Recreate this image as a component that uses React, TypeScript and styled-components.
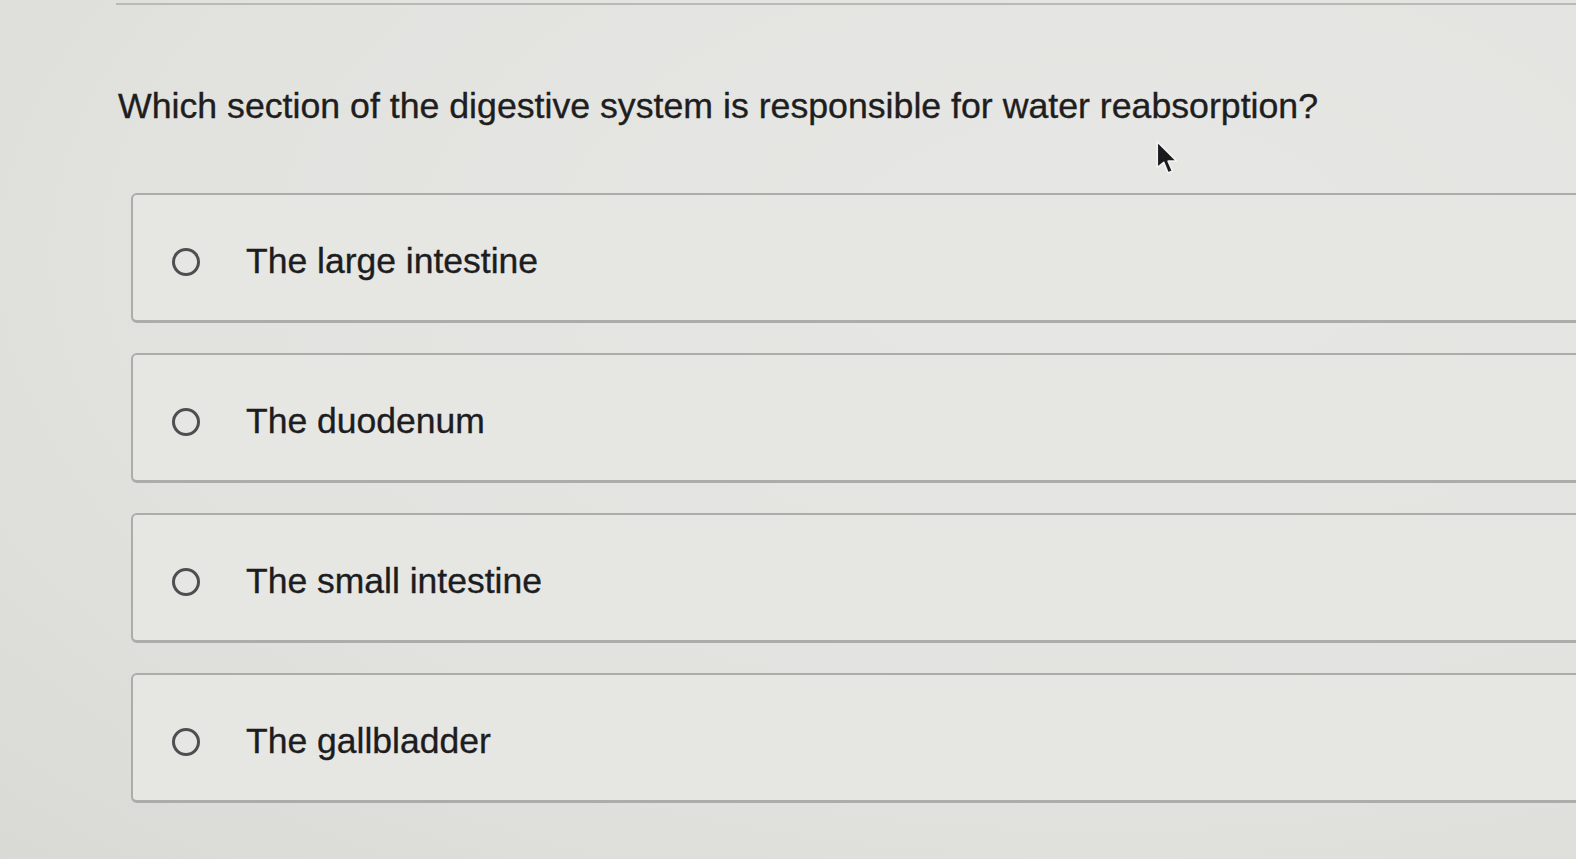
import React, { useState } from 'react';
import styled, { createGlobalStyle } from 'styled-components';

const GlobalStyle = createGlobalStyle`
  html, body {
    margin: 0;
    padding: 0;
    background: #e3e3e0;
  }
  body {
    font-family: 'Liberation Sans', Arial, sans-serif;
    color: #222;
  }
`;

const Page = styled.div`
  position: relative;
  width: 1576px;
  height: 859px;
  overflow: hidden;
  background: radial-gradient(ellipse at 70% 30%, #e7e7e5 0%, #e2e2df 60%, #d9d9d6 100%);
`;

const TopEdge = styled.div`
  margin-left: 116px;
  height: 3px;
  border-bottom: 2px solid #b9b9b7;
`;

const Question = styled.h1`
  margin: 80px 0 0 118px;
  font-size: 35.7px;
  font-weight: 400;
  line-height: 42px;
  color: #1e1e20;
  -webkit-text-stroke: 0.35px #1e1e20;
`;

const OptionList = styled.div`
  display: flex;
  flex-direction: column;
  gap: 30px;
  margin: 66px -24px 0 131px;
`;

const Option = styled.label`
  display: flex;
  align-items: center;
  gap: 46px;
  height: 130px;
  box-sizing: border-box;
  padding: 8px 0 0 39px;
  border: 2px solid #acacaa;
  border-bottom-width: 3px;
  border-radius: 6px;
  background: #e6e6e3;
  cursor: pointer;
`;

const Radio = styled.span<{ checked: boolean }>`
  width: 28px;
  height: 28px;
  box-sizing: border-box;
  border-radius: 50%;
  border: 3px solid #4f4f52;
  background: ${(props) => (props.checked ? '#4f4f52' : 'transparent')};
  flex-shrink: 0;
`;

const OptionText = styled.span`
  font-size: 35.5px;
  color: #1d1d1f;
  -webkit-text-stroke: 0.35px #1d1d1f;
`;

const Cursor = styled.svg`
  position: absolute;
  left: 1154px;
  top: 139px;
`;

const options = [
  'The large intestine',
  'The duodenum',
  'The small intestine',
  'The gallbladder',
];

const App = () => {
  const [selected, setSelected] = useState<number | null>(null);

  return (
    <>
      <GlobalStyle />
      <Page>
        <TopEdge />
        <Question>
          Which section of the digestive system is responsible for water reabsorption?
        </Question>
        <OptionList>
          {options.map((text, i) => (
            <Option key={text} onClick={() => setSelected(i)}>
              <Radio checked={selected === i} />
              <OptionText>{text}</OptionText>
            </Option>
          ))}
        </OptionList>
        <Cursor width='26' height='40' viewBox='0 0 24 36'>
          <path
            d='M3 2 L3 26 L9 21 L13 31 L17 29 L13 20 L21 20 Z'
            fill='#1a1a1c'
            stroke='#f2f2f2'
            strokeWidth='1.5'
            strokeLinejoin='round'
          />
        </Cursor>
      </Page>
    </>
  );
};

export default App;
